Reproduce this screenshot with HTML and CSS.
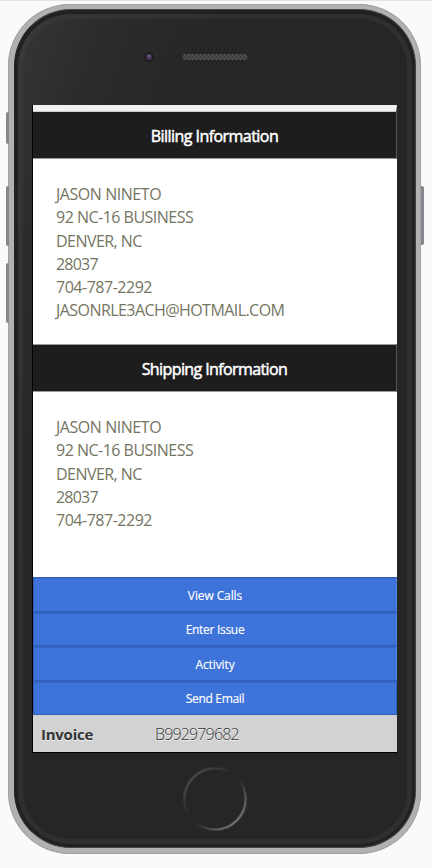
FILE: index.html
```html
<!DOCTYPE html>
<html lang="en">
<head>
<meta charset="utf-8">
<title>Customer information</title>
<link rel="stylesheet" href="styles.css">
</head>
<body>
<main class="phone">
  <i class="key mute"></i><i class="key up"></i><i class="key down"></i><i class="key power"></i>
  <div class="bezel">
    <div class="face">
      <div class="top">
        <svg class="camera" width="16" height="16" viewBox="0 0 16 16"><circle cx="8" cy="8" r="7" fill="#242424" stroke="#303030"/><circle cx="8" cy="8" r="4.2" fill="#1c1926"/><circle cx="8" cy="8" r="3" fill="#443657"/><path d="M7 7h2" stroke="#a598b2"/></svg>
        <svg class="speaker" width="66" height="8" viewBox="0 0 66 8"><defs><pattern id="mesh" width="4" height="4" patternUnits="userSpaceOnUse"><path fill="#444" d="M0 0h4v4H0z"/><path fill="#606060" d="M0 0h1v1H0zM2 2h1v1H2z"/><path fill="#303030" d="M2 0h1v1H2zM0 2h1v1H0z"/></pattern></defs><rect x=".5" y="1" width="65" height="6" rx="3" fill="url(#mesh)"/></svg>
      </div>
      <section class="screen">
        <h2 class="first">Billing Information</h2>
        <address>
          <span class="name">JASON NINETO</span>
          <span class="street">92 NC-16 BUSINESS</span>
          <span class="city">DENVER, NC</span>
          <span class="zip">28037</span>
          <span class="tel">704-787-2292</span>
          <span class="mail">JASONRLE3ACH@HOTMAIL.COM</span>
        </address>
        <h2 class="second">Shipping Information</h2>
        <address>
          <span class="name">JASON NINETO</span>
          <span class="street">92 NC-16 BUSINESS</span>
          <span class="city">DENVER, NC</span>
          <span class="zip">28037</span>
          <span class="tel">704-787-2292</span>
        </address>
        <nav>
          <button>View Calls</button>
          <button class="snug">Enter Issue</button>
          <button>Activity</button>
          <button class="snug">Send Email</button>
        </nav>
        <div class="invoice"><b>Invoice</b><span>B992979682</span></div>
      </section>
      <svg class="home" width="66" height="66" viewBox="0 0 66 66"><defs><linearGradient id="ring" x1="0" y1="0" x2="1" y2="1"><stop offset=".1" stop-color="#4c4c4c"/><stop offset=".42" stop-color="#262626"/><stop offset=".55" stop-color="#262626"/><stop offset=".85" stop-color="#6a6a6a"/></linearGradient></defs><circle cx="33" cy="33" r="30.6" fill="none" stroke="url(#ring)" stroke-width="2.5"/></svg>
    </div>
  </div>
</main>
</body>
</html>
```
FILE: styles.css
```css
* { box-sizing: border-box; }
body {
  margin: 0;
  height: 868px;
  overflow: hidden;
  background: #fafafa;
  border-top: 1px solid #e4e4e4;
  font: 16px "Open Sans", "Noto Sans", sans-serif;
}
.phone {
  position: relative;
  width: 413px;
  height: 850px;
  margin: 3px 0 0 8px;
  padding: 5px 5px 6px 6px;
  border-radius: 62px;
  background: #b1b1b1;
  box-shadow: inset 0 0 0 1px #a2a2a2;
}
.bezel {
  height: 100%;
  padding: 4px 3px 3px;
  border: 1px solid #444;
  border-left-color: #222;
  border-radius: 57px;
  background: #212121;
}
.face {
  height: 100%;
  border: 5px solid rgba(65, 65, 65, .35);
  border-radius: 53px;
  background: linear-gradient(110deg, #363636 0, #2b2b2b 90px, #262626 190px) border-box 0 0 / 100% 550px no-repeat, #262626;
  display: flex;
  flex-direction: column;
  align-items: center;
}
.key {
  position: absolute;
  left: -2px;
  width: 3px;
  background: #85858b;
  border-radius: 2px 0 0 2px;
}
.mute { top: 108px; height: 32px; }
.up { top: 182px; height: 60px; }
.down { top: 259px; height: 60px; }
.power { left: auto; right: -3px; top: 182px; height: 59px; border-radius: 0 2px 2px 0; }
.top {
  width: 100%;
  height: 86px;
  flex: none;
  display: flex;
  align-items: flex-start;
  padding: 30px 0 0 118px;
}
.speaker { margin: 4px 0 0 25px; }
.screen {
  width: 365px;
  height: 648px;
  flex: none;
  display: flex;
  flex-direction: column;
  margin-right: 1px;
  background: #fff;
  border: solid #000;
  border-width: 0 0 1px 1px;
}
h2 {
  margin: 0;
  height: 48px;
  flex: none;
  background: #1d1d1d;
  border: solid #999;
  border-width: 1px 1px 1px 0;
  border-right-color: #555;
  color: #fff;
  font-size: 16px;
  font-weight: 400;
  -webkit-text-stroke: .5px #fff;
  line-height: 48px;
  text-align: center;
}
.first { height: 54px; border-top: 6px solid #f1f1f1; box-shadow: inset 0 1px #ccc; line-height: 50px; letter-spacing: -.55px; }
.second { letter-spacing: -.6px; }
address {
  height: 185px;
  flex: none;
  padding: 24px 24px 0 23px;
  color: #75755f;
  font-style: normal;
  line-height: 23.3px;
}
address span { display: block; width: max-content; white-space: nowrap; }
.name { letter-spacing: -.45px; }
.street { letter-spacing: -.51px; }
.city { letter-spacing: -.55px; }
.zip { letter-spacing: -.8px; }
.tel { letter-spacing: -.48px; }
.mail { letter-spacing: -.56px; }
nav {
  height: 138px;
  flex: none;
  display: grid;
  grid-template-rows: repeat(4, 1fr);
}
button {
  padding: 2px 0 0;
  border: 1px solid #315fbd;
  box-shadow: inset 0 1px #3868c6;
  background: #3e73da;
  color: #fff;
  font: 12px "Open Sans", sans-serif;
  letter-spacing: -.1px;
  -webkit-text-stroke: .15px #fff;
}
button:not(:last-child) { border-right-color: #5585e4; }
.snug { letter-spacing: -.3px; }
.invoice {
  flex: 1;
  display: flex;
  align-items: center;
  padding-left: 8px;
  background: #d2d2d2;
  color: #333;
  text-shadow: 0 1px #f3f3f3;
}
.invoice b { width: 114px; font-size: 15px; letter-spacing: -.25px; }
.invoice span { font-weight: 300; letter-spacing: -.85px; }
.home { margin-top: 13px; flex: none; }
```
